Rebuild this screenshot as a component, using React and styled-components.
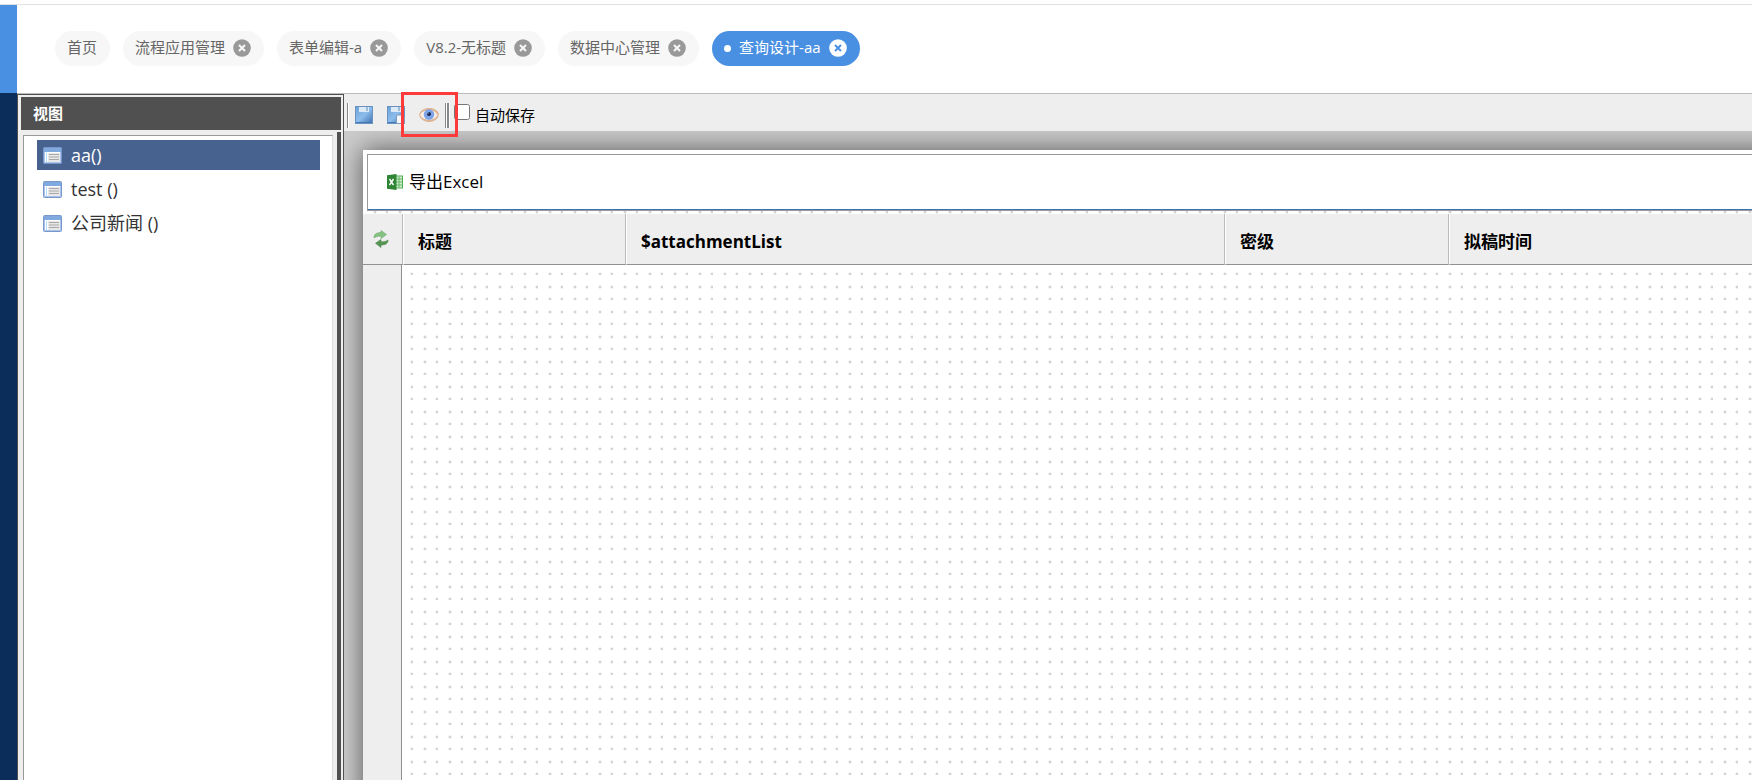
import React, { useState } from 'react'
import styled, { createGlobalStyle, css } from 'styled-components'

const tabs = [
    { title: '首页', fixed: true },
    { title: '流程应用管理' },
    { title: '表单编辑-a' },
    { title: 'V8.2-无标题' },
    { title: '数据中心管理' },
    { title: '查询设计-aa' },
]

const views = ['aa()', 'test ()', '公司新闻 ()']

const columns = [
    { title: '标题', width: 223 },
    { title: '$attachmentList', width: 599 },
    { title: '密级', width: 224 },
    { title: '拟稿时间' },
]

export default function App() {
    const [tab, setTab] = useState(5)
    const [view, setView] = useState(0)

    return (
        <>
            <GlobalStyle />
            <Page>
                <Rail />
                <Main>
                    <TabBar>
                        {tabs.map((t, i) => (
                            <Tab key={t.title} $active={i === tab}>
                                {i === tab && <Dot />}
                                <TabName type="button" onClick={() => setTab(i)}>{t.title}</TabName>
                                {!t.fixed && (
                                    <IconButton type="button" aria-label={`关闭${t.title}`}>
                                        <CloseIcon />
                                    </IconButton>
                                )}
                            </Tab>
                        ))}
                    </TabBar>
                    <Workspace>
                        <Sidebar>
                            <SidebarTitle>视图</SidebarTitle>
                            <SidebarBody>
                                <ViewList>
                                    {views.map((v, i) => (
                                        <li key={v}>
                                            <ViewItem type="button" $active={i === view} onClick={() => setView(i)}>
                                                <FormIcon />
                                                {v}
                                            </ViewItem>
                                        </li>
                                    ))}
                                </ViewList>
                                <Splitter />
                            </SidebarBody>
                        </Sidebar>
                        <Designer>
                            <Toolbar>
                                <Separator />
                                <Tool type="button" aria-label="保存"><SaveIcon /></Tool>
                                <Tool type="button" aria-label="另存为"><SaveIcon copy /></Tool>
                                <Highlight>
                                    <Tool type="button" aria-label="预览"><EyeIcon /></Tool>
                                </Highlight>
                                <Separator />
                                <Separator $thick />
                                <AutoSave>
                                    <input type="checkbox" />
                                    <span>自动保存</span>
                                </AutoSave>
                            </Toolbar>
                            <Canvas>
                                <Sheet>
                                    <ActionBar>
                                        <Action type="button"><ExcelIcon />导出Excel</Action>
                                    </ActionBar>
                                    <Grid>
                                        <colgroup>
                                            <Col $width={40} />
                                            {columns.map(c => <Col key={c.title} $width={c.width} />)}
                                        </colgroup>
                                        <thead>
                                            <tr>
                                                <RefreshCell>
                                                    <IconButton type="button" aria-label="刷新"><RefreshIcon /></IconButton>
                                                </RefreshCell>
                                                {columns.map(c => <HeadCell key={c.title}>{c.title}</HeadCell>)}
                                            </tr>
                                        </thead>
                                    </Grid>
                                    <SheetBody>
                                        <RowHeader />
                                    </SheetBody>
                                </Sheet>
                            </Canvas>
                        </Designer>
                    </Workspace>
                </Main>
            </Page>
        </>
    )
}

const GlobalStyle = createGlobalStyle`
    *, *::before, *::after{
        box-sizing: border-box;
    }
    body{
        margin: 0;
        background: #fff;
        color: #000;
        font-family: "Open Sans", "Noto Sans CJK SC", sans-serif;
        font-size: 15px;
    }
    button{
        margin: 0;
        padding: 0;
        border: 0;
        background: none;
        color: inherit;
        font: inherit;
        cursor: pointer;
    }
    svg{
        display: block;
        flex: none;
    }
`;

const Page = styled.div`
    display: flex;
    height: 100vh;
    padding-top: 4px;
    overflow: hidden;
`;

const Rail = styled.div`
    flex: none;
    width: 17px;
    border-top: 1px solid #e1e1e1;
    background: linear-gradient(#4a90e2 88px, #0a2e59 88px);
`;

const Main = styled.div`
    flex: 1;
    min-width: 0;
    display: flex;
    flex-direction: column;
    border-top: 1px solid #e1e1e1;
`;

const TabBar = styled.nav`
    flex: none;
    display: flex;
    align-items: center;
    gap: 13px;
    height: 89px;
    padding: 0 0 2px 38px;
    border-bottom: 1px solid #bbb;
`;

const Tab = styled.div`
    display: flex;
    align-items: center;
    gap: 8px;
    height: 35px;
    padding: 0 13px 0 12px;
    border-radius: 18px;
    white-space: nowrap;
    background: ${({ $active }) => ($active ? '#4a90e2' : '#f7f7f7')};
    color: ${({ $active }) => ($active ? '#fff' : '#666')};

    circle{
        fill: ${({ $active }) => ($active ? '#fff' : '#999')};
    }
    path{
        stroke: ${({ $active }) => ($active ? '#4a90e2' : '#f7f7f7')};
    }
`;

const TabName = styled.button`
    padding-bottom: 2px;
    line-height: 20px;
`;

const Dot = styled.span`
    width: 7px;
    height: 7px;
    border-radius: 50%;
    background: #fff;
`;

const IconButton = styled.button`
    display: block;
`;

const Workspace = styled.div`
    flex: 1;
    min-height: 0;
    display: flex;
`;

const Sidebar = styled.aside`
    flex: none;
    display: flex;
    flex-direction: column;
    width: 327px;
    padding: 2px 2px 0 3px;
    border: 1px solid #505050;
    border-bottom: 0;
    background: #eee;
`;

const SidebarTitle = styled.h2`
    flex: none;
    margin: 0;
    padding-left: 12px;
    background: #505050;
    color: #fff;
    font-size: 15px;
    line-height: 33px;
`;

const SidebarBody = styled.div`
    flex: 1;
    min-height: 0;
    display: flex;
    justify-content: space-between;
    gap: 4px;
    padding: 2px 0 0 2px;
`;

const ViewList = styled.ul`
    flex: 1;
    display: flex;
    flex-direction: column;
    gap: 4px;
    margin: 3px 0 0;
    padding: 4px 12px 0 13px;
    border: 1px solid #999;
    border-right-color: #ddd;
    border-bottom: 0;
    background: #fff;
    list-style: none;
`;

const ViewItem = styled.button`
    display: flex;
    align-items: center;
    gap: 9px;
    width: 100%;
    height: 30px;
    padding-left: 6px;
    font-size: 18px;
    line-height: 30px;
    color: #333;

    ${({ $active }) => $active && css`
        background: #486290;
        color: #fff;
    `}
`;

const Splitter = styled.div`
    width: 4px;
    background: #505050;
`;

const Designer = styled.main`
    flex: 1;
    min-width: 0;
    display: flex;
    flex-direction: column;
`;

const Toolbar = styled.div`
    flex: none;
    display: flex;
    align-items: center;
    height: 37px;
    padding: 5px 0 0 3px;
    background: #eee;
`;

const Separator = styled.span`
    width: ${({ $thick }) => ($thick ? 3 : 2)}px;
    height: 25px;
    border-left: ${({ $thick }) => ($thick ? 2 : 1)}px solid #888;
    border-right: 1px solid #fff;
`;

const Tool = styled.button`
    display: flex;
    align-items: center;
    width: 32px;
    height: 25px;
    padding-left: 6px;
`;

const Highlight = styled.span`
    position: relative;

    &::after{
        content: '';
        position: absolute;
        top: -11px;
        left: -12px;
        z-index: 1;
        width: 57px;
        height: 45px;
        border: 3px solid #ff3a3a;
        pointer-events: none;
    }
`;

const AutoSave = styled.label`
    display: flex;
    align-items: flex-start;
    gap: 5px;
    margin-left: 4px;
    line-height: 25px;

    input{
        width: 16px;
        height: 16px;
        margin: 1px 0 0;
    }
`;

const Canvas = styled.div`
    flex: 1;
    min-height: 0;
    display: flex;
    padding: 19px 0 0 19px;
    overflow: hidden;
    background: #ccc;
`;

// four dots per tile keep the 12.5px grid on whole pixels
const Sheet = styled.section`
    flex: 1;
    min-width: 0;
    display: flex;
    flex-direction: column;
    margin: 0 -40px -40px 0;
    padding-top: 4px;
    box-shadow: 0 0 25px #555;
    background-color: #fff;
    background-image:
        radial-gradient(circle at 12px 12px, #bbb 0, transparent 2px),
        radial-gradient(circle at 24px 12px, #bbb 0, transparent 2px),
        radial-gradient(circle at 12px 24px, #bbb 0, transparent 2px),
        radial-gradient(circle at 24px 24px, #bbb 0, transparent 2px);
    background-size: 25px 25px;
`;

const ActionBar = styled.div`
    flex: none;
    display: flex;
    align-items: center;
    height: 57px;
    margin: 0 4px 3px;
    padding: 0 0 2px 19px;
    border: 1px solid #999;
    box-shadow: inset 0 -1px #3a72b0;
    background: #fff;
`;

const Action = styled.button`
    display: flex;
    align-items: center;
    gap: 6px;
    font-size: 17px;
    line-height: 24px;
`;

const Grid = styled.table`
    flex: none;
    width: 100%;
    table-layout: fixed;
    border-collapse: separate;
    border-spacing: 0;
    background: #eee;
`;

const Col = styled.col`
    width: ${({ $width }) => ($width ? `${$width}px` : 'auto')};
`;

const HeadCell = styled.th`
    height: 51px;
    padding: 6px 0 0 14px;
    border-left: 1px solid #fff;
    border-right: 1px solid #bbb;
    border-bottom: 1px solid #909090;
    font-size: 17px;
    line-height: 24px;
    text-align: left;
`;

const RefreshCell = styled(HeadCell)`
    padding: 0 0 0 10px;
    border-left: 0;
`;

const SheetBody = styled.div`
    flex: 1;
    display: flex;
`;

const RowHeader = styled.div`
    width: 39px;
    border-right: 1px solid #909090;
    background: #eee;
`;

function CloseIcon() {
    return (
        <svg width="18" height="18" viewBox="0 0 18 18">
            <circle cx="9" cy="9" r="8.8" />
            <path d="M6 6l6 6M12 6l-6 6" strokeWidth="2" />
        </svg>
    )
}

function FormIcon() {
    return (
        <svg width="19" height="17" viewBox="0 0 19 17">
            <rect x=".5" y=".5" width="18" height="16" rx="1" fill="#a9c3ea" stroke="#7898cc" />
            <rect x="1" y="1" width="17" height="4" fill="#80a9e0" />
            <rect x="2" y="5" width="15" height="10" fill="#fff" />
            <rect x="5" y="6" width="12" height="9" fill="#e8e8e8" />
            <path d="M3.5 6v9" stroke="#b4dcff" />
            <path d="M6 7.5h10M6 10h10M6 12.5h10" stroke="#a8a8a8" />
        </svg>
    )
}

function SaveIcon({ copy }) {
    return (
        <svg width="18" height="18" viewBox="0 0 18 18">
            <defs>
                <linearGradient id="disk" x1="0" y1="0" x2="1" y2="1">
                    <stop offset="0" stopColor="#6ba0d6" />
                    <stop offset=".5" stopColor="#8dbdec" />
                    <stop offset="1" stopColor="#3c70ae" />
                </linearGradient>
            </defs>
            <rect x=".5" y=".5" width="17" height="17" fill="url(#disk)" stroke="#6a93c0" />
            <path d="M4 1h10v5H4z" fill="#dce9f6" />
            <path d="M11 1h2v4h-2z" fill="#9dbad8" />
            <path d="M1 16.5h16" stroke="#4478b4" />
            {copy && <path d="M9.5 9h5l3 3v5.5h-8z" fill="#f4f6fa" stroke="#7c9cc2" />}
        </svg>
    )
}

function EyeIcon() {
    return (
        <svg width="20" height="16" viewBox="0 0 20 16">
            <path d="M0 8C2-1 17-1 20 7c-1 10-17 11-20 1z" fill="#deb594" />
            <path d="M1 8c3-6 14-7 17.5 0-3 6.5-14 6.5-17.5 0z" fill="#f5eee8" />
            <circle cx="10" cy="7.5" r="5.2" fill="#7da3e8" />
            <circle cx="10" cy="7" r="2" fill="#182448" />
            <circle cx="9" cy="6" r=".7" fill="#b8d0ff" />
        </svg>
    )
}

function ExcelIcon() {
    return (
        <svg width="16" height="16" viewBox="0 0 16 16">
            <rect x="8" y="2" width="7.5" height="12" fill="#d5edd5" stroke="#4cae50" />
            <path d="M9 5h6M9 8h6M9 11h6M12 2.5v11" stroke="#5cb85f" />
            <path d="M0 1.2L9.5 0v16L0 14.8z" fill="#2e8535" />
            <path d="M2.5 5l4 6M6.5 5l-4 6" stroke="#fff" strokeWidth="1.4" />
        </svg>
    )
}

function RefreshIcon() {
    return (
        <svg width="16" height="18" viewBox="0 0 16 18">
            <path d="M1 7c0-3 3-4.5 7-4.5V.5l5.500 4L8 8.500V6.200C5 6 3 6.500 1 8z" fill="#85c281" stroke="#70ad6d" strokeWidth=".6" />
            <path d="M15 10c0 4-3 5-7 5v2.500L2.500 13.200 8 9.500v2.300c3 .2 5-.3 7-1.800z" fill="#559653" stroke="#4b8549" strokeWidth=".6" />
        </svg>
    )
}
